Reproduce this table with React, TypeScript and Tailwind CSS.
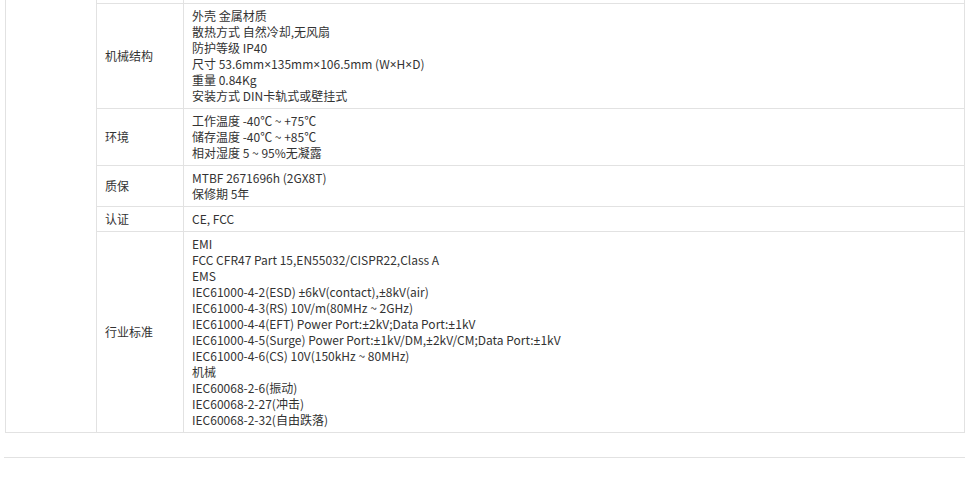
import React from 'react';

const rows: { label: string; lines: string[] }[] = [
  {
    label: '机械结构',
    lines: [
      '外壳 金属材质',
      '散热方式 自然冷却,无风扇',
      '防护等级 IP40',
      '尺寸 53.6mm×135mm×106.5mm (W×H×D)',
      '重量 0.84Kg',
      '安装方式 DIN卡轨式或壁挂式',
    ],
  },
  {
    label: '环境',
    lines: ['工作温度 -40℃ ~ +75℃', '储存温度 -40℃ ~ +85℃', '相对湿度 5 ~ 95%无凝露'],
  },
  {
    label: '质保',
    lines: ['MTBF 2671696h (2GX8T)', '保修期 5年'],
  },
  {
    label: '认证',
    lines: ['CE, FCC'],
  },
  {
    label: '行业标准',
    lines: [
      'EMI',
      'FCC CFR47 Part 15,EN55032/CISPR22,Class A',
      'EMS',
      'IEC61000-4-2(ESD) ±6kV(contact),±8kV(air)',
      'IEC61000-4-3(RS) 10V/m(80MHz ~ 2GHz)',
      'IEC61000-4-4(EFT) Power Port:±2kV;Data Port:±1kV',
      'IEC61000-4-5(Surge) Power Port:±1kV/DM,±2kV/CM;Data Port:±1kV',
      'IEC61000-4-6(CS) 10V(150kHz ~ 80MHz)',
      '机械',
      'IEC60068-2-6(振动)',
      'IEC60068-2-27(冲击)',
      'IEC60068-2-32(自由跌落)',
    ],
  },
];

// ± and × come out full-width in the CJK font, so give them a latin one
function SpecLine({ text }: { text: string }) {
  const parts = text.split(/([±×])/);
  return (
    <div className="h-4 whitespace-nowrap">
      {parts.map((p, i) =>
        p === '±' || p === '×' ? (
          <span key={i} className="font-['Noto_Sans'] leading-none">
            {p}
          </span>
        ) : (
          <React.Fragment key={i}>{p}</React.Fragment>
        )
      )}
    </div>
  );
}

export default function App() {
  return (
    <div className="w-[968px] h-[478px] bg-white text-[12px] leading-4 text-[#333] font-['Noto_Sans_CJK_SC','Noto_Sans',sans-serif]">
      {/* spec table, cut off at the top */}
      <div className="ml-[5px] w-[960px] flex border-l border-r border-b border-[#e2e2e2]">
        <div className="w-[91px] shrink-0 border-r border-[#e2e2e2]" />
        <div className="flex-1 flex flex-col">
          <div className="h-[4px] flex border-b border-[#e2e2e2]">
            <div className="w-[87px] shrink-0 border-r border-[#e2e2e2]" />
            <div className="flex-1" />
          </div>
          {rows.map((row, i) => (
            <div
              key={row.label}
              className={i < rows.length - 1 ? 'flex border-b border-[#e2e2e2]' : 'flex'}
            >
              <div className="w-[87px] shrink-0 border-r border-[#e2e2e2] pl-2 flex items-center">
                {row.label}
              </div>
              <div className="flex-1 pl-2 py-1">
                {row.lines.map(line => (
                  <SpecLine key={line} text={line} />
                ))}
              </div>
            </div>
          ))}
        </div>
      </div>

      <div className="mt-6 ml-[4px] w-[961px] border-t border-[#e2e2e2]" />
    </div>
  );
}
